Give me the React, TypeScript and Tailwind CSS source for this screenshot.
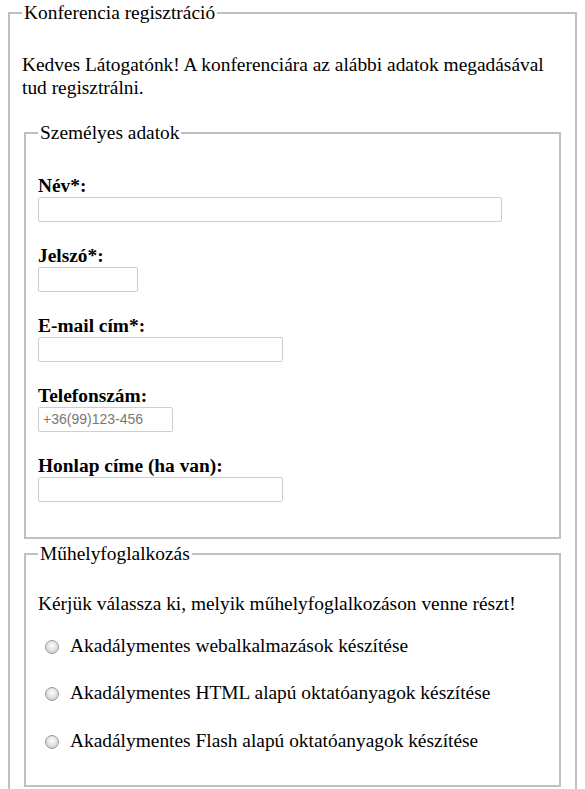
const fields = [
  { label: 'Név*:', width: 'w-[464px]', type: 'text', placeholder: '' },
  { label: 'Jelszó*:', width: 'w-[100px]', type: 'password', placeholder: '' },
  { label: 'E-mail cím*:', width: 'w-[245px]', type: 'email', placeholder: '' },
  { label: 'Telefonszám:', width: 'w-[135px]', type: 'tel', placeholder: '+36(99)123-456' },
  { label: 'Honlap címe (ha van):', width: 'w-[245px]', type: 'url', placeholder: '' },
]

const workshops = [
  'Akadálymentes webalkalmazások készítése',
  'Akadálymentes HTML alapú oktatóanyagok készítése',
  'Akadálymentes Flash alapú oktatóanyagok készítése',
]

const App = () => {
  return (
    <div className="min-h-screen bg-white px-[8px] font-['Liberation_Serif',serif] text-[19.4px] leading-[22px] text-black">
      <form>
        <fieldset className="mt-[2px] border-2 border-[#c0c0c0] px-[12px] pt-[7px] pb-[40px]">
          <legend className="px-[2px]">Konferencia regisztráció</legend>

          <p className="mt-[21.5px] leading-[23.5px]">
            Kedves Látogatónk! A konferenciára az alábbi adatok megadásával tud regisztrálni.
          </p>

          <fieldset className="mx-[2px] mt-[22px] border-2 border-[#c0c0c0] px-[12px] pt-[7px] pb-[35px]">
            <legend className="px-[2px]">Személyes adatok</legend>

            {fields.map((f, i) => (
              <div key={f.label} className={i === 0 ? 'mt-[24px]' : 'mt-[23px]'}>
                <label htmlFor={'f' + i} className="block font-bold">
                  {f.label}
                </label>
                <input
                  id={'f' + i}
                  type={f.type}
                  placeholder={f.placeholder}
                  className={`${f.width} block h-[25px] rounded-[2px] border border-[#cdcdd4] bg-white px-[4px] font-['Liberation_Sans',sans-serif] text-[14px] placeholder:text-[#777777] focus:outline-none`}
                />
              </div>
            ))}
          </fieldset>

          <fieldset className="mx-[2px] mt-[4px] border-2 border-[#c0c0c0] px-[12px] pt-[7px] pb-[33px]">
            <legend className="px-[2px]">Műhelyfoglalkozás</legend>

            <p className="mt-[21px]">Kérjük válassza ki, melyik műhelyfoglalkozáson venne részt!</p>

            {workshops.map((w, i) => (
              <label key={w} className={`flex items-center ${i === 0 ? 'mt-[20px]' : 'mt-[25.5px]'}`}>
                <input
                  type="radio"
                  name="workshop"
                  className="ml-[7px] mr-[11px] mt-[2px] h-[14px] w-[14px] appearance-none rounded-full border border-[#9c9c9c] bg-[radial-gradient(circle_at_50%_40%,#ffffff_0%,#e8e8e8_40%,#bdbdbd_100%)]"
                />
                <span>{w}</span>
              </label>
            ))}
          </fieldset>
        </fieldset>
      </form>
    </div>
  )
}

export default App
